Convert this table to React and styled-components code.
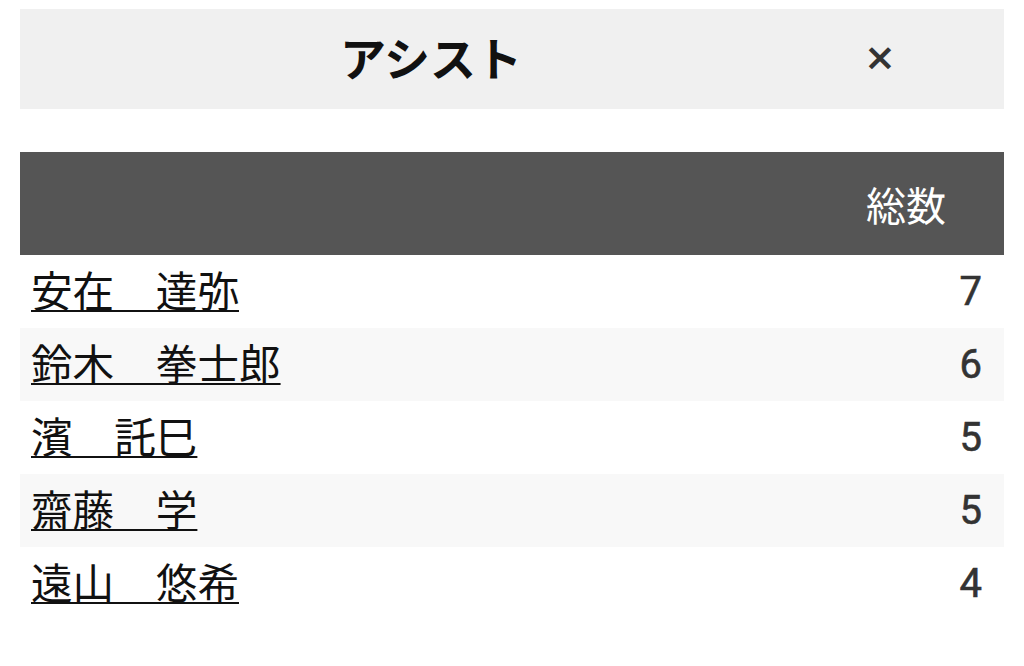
import React from 'react'
import styled, { createGlobalStyle } from 'styled-components'

const GlobalStyle = createGlobalStyle`
  body {
    margin: 0;
    background: #fff;
    font-family: Roboto, "Noto Sans CJK JP", sans-serif;
  }
`

const Page = styled.div`
  padding: 9px 20px 0;
`

const HeaderBar = styled.div`
  height: 100px;
  background-color: #f0f0f0;
  display: grid;
  grid-template-columns: 822px 1fr;
  align-items: center;
`

const Title = styled.h1`
  margin: 0 0 6px;
  text-align: center;
  font-family: "Noto Sans CJK JP", sans-serif;
  font-size: 46px;
  line-height: 1;
  font-weight: 700;
  color: #111;
`

const Close = styled.button`
  justify-self: start;
  margin-left: 22px;
  margin-bottom: 4px;
  border: none;
  background: none;
  padding: 0;
  font-family: "DejaVu Sans", sans-serif;
  font-size: 38px;
  font-weight: 700;
  color: #333;
  cursor: pointer;
`

const Table = styled.div`
  margin-top: 43px;
`

const HeadRow = styled.div`
  height: 103px;
  background-color: #555;
  display: flex;
  justify-content: flex-end;
  align-items: center;
  padding-right: 58px;
`

const HeadCell = styled.span`
  color: #fff;
  font-family: "Noto Sans CJK JP", sans-serif;
  font-size: 40px;
  font-weight: 400;
`

const Row = styled.div`
  height: 73px;
  display: flex;
  align-items: center;
  justify-content: space-between;
  padding: 0 22px 0 11px;
  background-color: ${p => (p.$odd ? '#f8f8f8' : '#fff')};
`

const Name = styled.a`
  font-family: "Noto Sans CJK JP", sans-serif;
  font-size: 41.6px;
  line-height: 1;
  margin-bottom: 4px;
  color: #111;
  text-decoration: underline;
  text-decoration-thickness: 2px;
  text-underline-offset: 3px;
`

const Count = styled.span`
  font-family: Roboto, sans-serif;
  font-size: 40px;
  font-weight: 400;
  color: #333;
  -webkit-text-stroke: 0.6px #333;
`

const players = [
  { name: '安在　達弥', count: 7 },
  { name: '鈴木　拳士郎', count: 6 },
  { name: '濱　託巳', count: 5 },
  { name: '齋藤　学', count: 5 },
  { name: '遠山　悠希', count: 4 },
]

const App = () => {
  return (
    <Page>
      <GlobalStyle />
      <HeaderBar>
        <Title>アシスト</Title>
        <Close>×</Close>
      </HeaderBar>
      <Table>
        <HeadRow>
          <HeadCell>総数</HeadCell>
        </HeadRow>
        {players.map((p, i) => (
          <Row key={p.name} $odd={i % 2 === 1}>
            <Name href="#">{p.name}</Name>
            <Count>{p.count}</Count>
          </Row>
        ))}
      </Table>
    </Page>
  )
}

export default App
